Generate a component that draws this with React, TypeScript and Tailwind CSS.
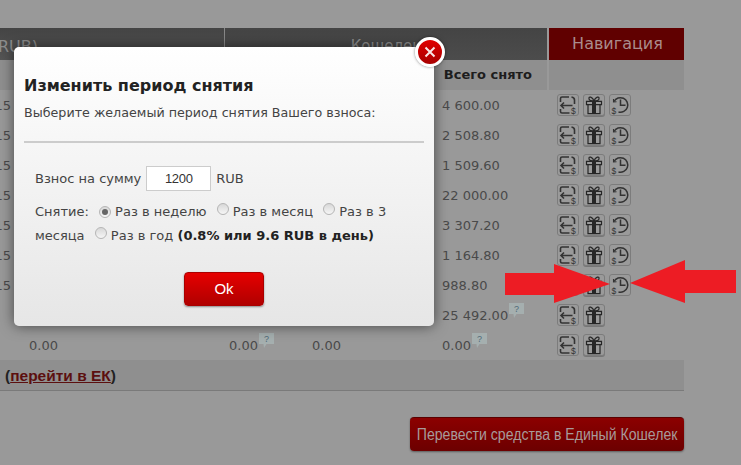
const font = "font-['DejaVu_Sans','Liberation_Sans',sans-serif]"

const rows: { left: string; b?: string; c?: string; total: string; bubble?: boolean; clock: boolean }[] = [
  { left: '0.15', total: '4 600.00', clock: true },
  { left: '0.15', total: '2 508.80', clock: true },
  { left: '0.15', total: '1 509.60', clock: true },
  { left: '0.15', total: '22 000.00', clock: true },
  { left: '0.15', total: '3 307.20', clock: true },
  { left: '0.15', total: '1 164.80', clock: true },
  { left: '0.15', total: '988.80', clock: true },
  { left: '', total: '25 492.00', bubble: true, clock: false },
  { left: '', b: '0.00', c: '0.00', total: '0.00', bubble: true, clock: false },
]

function IconBox({ children, thick }: { children: React.ReactNode; thick?: boolean }) {
  return (
    <span
      className={`flex h-[22px] w-[22px] items-center justify-center rounded-[3px] border border-[#7c7c7c] bg-[#9a9a9a] ${
        thick ? 'shadow-[0_1px_0_#777]' : ''
      }`}
    >
      {children}
    </span>
  )
}

function ExitIcon() {
  return (
    <svg width="20" height="20" viewBox="0 0 20 20" fill="none" stroke="#333" strokeWidth="1.600">
      <path d="M2.500 7V3.500Q2.500 2 4 2H11" />
      <path d="M13.500 2Q16.500 2.500 16.500 5V9" />
      <path d="M2.500 14V16.500Q2.500 18 4 18H11.500" />
      <path d="M14.500 10.500H3M6 7.500 3 10.500l3 3" />
      <text x="13" y="18.500" fontSize="8.500" fill="#333" stroke="none" fontFamily="Liberation Sans">$</text>
    </svg>
  )
}

function GiftIcon() {
  return (
    <svg width="20" height="20" viewBox="0 0 20 20" fill="none" stroke="#262626" strokeWidth="1.200">
      <path d="M10 6C8.500 1.500 4.500 1 5 3.800 5.300 5.500 8 6 10 6c2 0 4.700-.5 5-2.200C15.500 1 11.500 1.500 10 6Z" />
      <path d="M2.500 6.300h15v3.400h-15zM4 9.700h12V18.700H4z" fill="#9a9a9a" />
      <path d="M8 6.300h4V18.700H8z" fill="#262626" stroke="none" />
    </svg>
  )
}

function ClockIcon() {
  return (
    <svg width="20" height="20" viewBox="0 0 20 20" fill="none" stroke="#333" strokeWidth="1.500">
      <path d="M4 6.500A7.300 7.300 0 1 1 8.500 17" />
      <path d="M3.500 4 3.500 7 6.500 6.800" strokeWidth="1.100" />
      <path d="M10.500 4.500V10.300H15.500" />
      <text x="1.500" y="18.500" fontSize="8.500" fill="#333" stroke="none" fontFamily="Liberation Sans">$</text>
    </svg>
  )
}

function Bubble() {
  return (
    <svg width="15" height="15" viewBox="0 0 15 15" className="mb-[11px] ml-[1px] inline-block">
      <path d="M0 0h15v11H7.500L5 15 4.500 11H0z" fill="#a5afaf" />
      <text x="5" y="9" fontSize="9" fill="#4f6a78" fontFamily="Liberation Sans">?</text>
    </svg>
  )
}

function Radio({ checked }: { checked?: boolean }) {
  return (
    <span className="ml-[6px] inline-flex h-[12px] w-[12px] items-center justify-center rounded-full border border-[#b5b5b5] bg-gradient-to-b from-[#d8d8d8] to-[#f6f6f6] align-[1px]">
      {checked && <span className="h-[6px] w-[6px] rounded-full bg-[#666]" />}
    </span>
  )
}

export default function App() {
  return (
    <div className={`relative h-[465px] w-[741px] overflow-hidden bg-[#999] pt-[28px] ${font}`}>
      <div className="w-[684px]">
        {/* Header */}
        <div className="flex h-[32px] text-[15px] text-[#8d8d8d]">
          <div className="w-[224px] overflow-hidden bg-gradient-to-b from-[#444] to-[#555] pt-[7px] text-[16px] whitespace-nowrap">
            <span className="-ml-[2px] block">RUB)</span>
          </div>
          <div className="w-[323px] border-l border-[#888] bg-gradient-to-b from-[#444] to-[#4c4c4c] pt-[7px] text-center">
            Кошелек
          </div>
          <div className="ml-[2px] flex w-[135px] items-center justify-center bg-[#600000] pl-[2px] text-[16px] text-[#aa8c8c]">Навигация</div>
        </div>
        <div className="flex h-[30px] bg-[#8f8f8f]">
          <div className="flex w-[547px] items-center justify-end pr-[15px] text-[13px] font-bold text-[#1d1d1d]">
            Всего снято
          </div>
          <div className="w-[2px] bg-[#999]" />
        </div>

        {/* Rows */}
        {rows.map((row, i) => (
          <div key={i} className="grid h-[30px] grid-cols-[224px_83px_131px_111px_135px] items-center text-[13px] text-[#4a4a4a]">
            <div className="overflow-hidden pt-[2px] whitespace-nowrap">
              {row.left ? <span className="-ml-[18px] block">{row.left}</span> : <span className="ml-[29px]">{i === 8 ? '0.00' : ''}</span>}
            </div>
            <div className="pt-[2px] pl-[5px]">{row.b && <span className="flex items-center">{row.b}<Bubble /></span>}</div>
            <div className="pt-[2px] pl-[5px]">{row.c}</div>
            <div className="flex items-center pt-[2px] pl-[4px]">
              {row.total}
              {row.bubble && <Bubble />}
            </div>
            <div className="flex gap-[4px] pl-[8px]">
              <IconBox>
                <ExitIcon />
              </IconBox>
              <IconBox thick>
                <GiftIcon />
              </IconBox>
              {row.clock && (
                <IconBox>
                  <ClockIcon />
                </IconBox>
              )}
            </div>
          </div>
        ))}

        {/* Footer strip */}
        <div className="flex h-[31px] items-center border-b border-[#7a7a7a] bg-[#8f8f8f] pt-[2px] pl-[5px] font-['Liberation_Sans',sans-serif] text-[15.500px] font-bold text-[#222]">
          (<span className="text-[#5c0f0f] underline">перейти в ЕК</span>)
        </div>

        <div className="mt-[26px] flex justify-end">
          <button
            type="button"
            className="flex h-[34px] w-[274px] items-center justify-center overflow-hidden rounded-[4px] border-t border-[#5a0000] bg-gradient-to-b from-[#8c0000] to-[#6c0000] font-['Liberation_Sans',sans-serif] text-[16px] whitespace-nowrap text-[#a89a9a] shadow-[0_1px_2px_rgba(0,0,0,0.4)]"
          >
            <span className="inline-block scale-x-[0.88]">Перевести средства в Единый Кошелек</span>
          </button>
        </div>
      </div>

      {/* Modal */}
      <div className="absolute top-[47px] left-[14px] h-[279px] w-[420px] rounded-[5px] bg-gradient-to-b from-white to-[#e6e6e6] px-[10px] pt-[29px] text-[13px] text-[#444] shadow-[0_0_14px_rgba(0,0,0,0.55)]">
        <h2 className="text-[16px] leading-[20px] font-bold text-[#222]">Изменить период снятия</h2>
        <p className="mt-[7px] text-[12.700px] leading-[20px]">Выберите желаемый период снятия Вашего взноса:</p>
        <div className="mt-[18px] h-[2px] bg-[#ccc]" />
        <div className="mt-[23px] flex items-center px-[11px]">
          <span>Взнос на сумму</span>
          <span className="mx-[5px] flex h-[25px] w-[65px] items-center justify-center border border-[#ccc] bg-white font-['Liberation_Sans',sans-serif] text-[13px] tracking-[-0.3px] text-[#333]">1200</span>
          <span>RUB</span>
        </div>
        <p className="mt-[9px] px-[11px] leading-[24px]">
          Снятие: <Radio checked /> Раз в неделю <Radio /> Раз в месяц <Radio /> Раз в 3 месяца <Radio /> Раз в год{' '}
          <b className="text-[#222]">(0.8% или 9.6 RUB в день)</b>
        </p>
        <div className="mt-[24px] flex justify-center">
          <button
            type="button"
            className="h-[34px] w-[80px] rounded-[4px] border border-[#a00] bg-gradient-to-b from-[#e60000] to-[#b00000] font-['Liberation_Sans',sans-serif] text-[15px] text-white shadow-[0_1px_2px_rgba(0,0,0,0.4)]"
          >
            Ok
          </button>
        </div>

        {/* Close */}
        <button
          type="button"
          className="absolute -top-[10px] -right-[11px] flex h-[30px] w-[30px] items-center justify-center rounded-full border-[3px] border-white bg-gradient-to-b from-[#e00000] to-[#a80000] shadow-[0_0_3px_rgba(0,0,0,0.5)]"
        >
          <svg width="12" height="12" viewBox="0 0 12 12" stroke="#f8e6e6" strokeWidth="2" fill="none">
            <path d="M1.500 1.500l9 9M10.500 1.500l-9 9" />
          </svg>
        </button>
      </div>

      {/* Red arrows */}
      <svg width="236" height="48" viewBox="0 0 236 48" className="absolute top-[258px] left-[505px]" fill="#ed1c24">
        <path d="M0 15H49V6L105 26 49 45V37H0z" />
        <path d="M125 25 180 2V12H231V35H180V45z" />
      </svg>
    </div>
  )
}
